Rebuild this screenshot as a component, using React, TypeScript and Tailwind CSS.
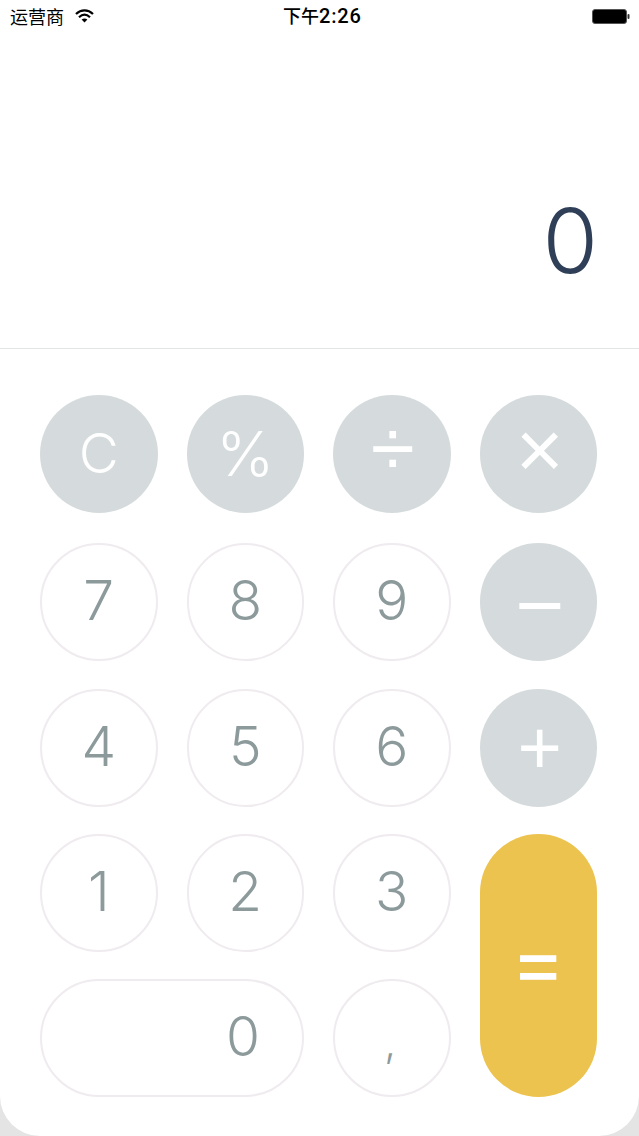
import React from "react";

const digitFont = "font-['Inter','Liberation_Sans',sans-serif] font-[270]";
const opFont = "font-['Liberation_Sans',sans-serif] font-normal";

function Op({ children, className = "" }: { children: React.ReactNode; className?: string }) {
  return (
    <div className={`flex h-[118px] items-center justify-center self-start rounded-full bg-[#d5dbdc] text-white ${className}`}>
      {children}
    </div>
  );
}

function Num({ children, className = "" }: { children: React.ReactNode; className?: string }) {
  return (
    <div className={`flex h-[118px] items-center justify-center self-start rounded-full border-2 border-[#efebef] bg-white text-[#8c9a9b] leading-none ${digitFont} ${className}`}>
      {children}
    </div>
  );
}

function StatusBar() {
  return (
    <div className="relative flex h-[32px] items-center justify-between pl-[10px] pr-[9px] text-[18px] leading-none text-black font-['Noto_Sans_CJK_SC','Liberation_Sans',sans-serif]">
      <div className="flex items-center gap-[11px]">
        <span>运营商</span>
        <svg width="19" height="14" viewBox="0 0 19 14" fill="none" stroke="#000" strokeWidth="2.2">
          <path d="M1 5 C6 0.2 13 0.2 18 5" />
          <path d="M4 8.2 C7.4 5 11.6 5 15 8.2" />
          <path d="M9.5 13.5 L6.6 10.6 C8.4 9.2 10.6 9.2 12.4 10.6 Z" fill="#000" stroke="none" />
        </svg>
      </div>
      <span className="absolute left-[283px] top-[6px] font-medium">
        下午<span className="text-[20px] tracking-[0.8px] font-['Roboto','Liberation_Sans',sans-serif]">2:26</span>
      </span>
      <svg width="38" height="15" viewBox="0 0 38 15">
        <rect x="0.5" y="0.5" width="34" height="14" rx="2.5" fill="#000" stroke="#555" />
        <rect x="35.5" y="5" width="2" height="5" rx="1" fill="#333" />
      </svg>
    </div>
  );
}

export default function App() {
  const d = "pb-[4px] text-[55px]";
  return (
    <div className="h-[1136px] w-[639px] overflow-hidden bg-[#e4e4e4]">
      <div className="flex h-[1136px] flex-col rounded-b-[40px] bg-white">
        <StatusBar />
        <div className="flex h-[317px] items-end justify-end border-b border-[#e3e4e4] pb-[62px] pr-[41px]">
          <span className="text-[90px] font-light leading-none text-[#2f3f58] font-['Inter','Liberation_Sans',sans-serif]">0</span>
        </div>
        <div className="grid grid-cols-4 grid-rows-[148px_146px_145px_145px_118px] gap-x-[29px] pl-[40px] pr-[42px] pt-[46px]">
          <Op className="pb-[2px] text-[55px] leading-none font-light font-['Inter','Liberation_Sans',sans-serif]">C</Op>
          <Op className="text-[62px] leading-none font-light font-['Inter','Liberation_Sans',sans-serif]">%</Op>
          <Op className={`pb-[10px] pl-[2px] text-[80px] leading-none ${opFont}`}>÷</Op>
          <Op className={`pb-[8px] pl-[3px] text-[82px] leading-none ${opFont}`}>×</Op>
          <Num className={d}>7</Num>
          <Num className={d}>8</Num>
          <Num className={d}>9</Num>
          <Op className={`pl-[3px] pt-[6px] text-[84px] leading-none ${opFont}`}>−</Op>
          <Num className={d}>4</Num>
          <Num className={d}>5</Num>
          <Num className={d}>6</Num>
          <Op className={`pl-[3px] text-[76px] leading-none ${opFont}`}>+</Op>
          <Num className={d}>1</Num>
          <Num className={d}>2</Num>
          <Num className={d}>3</Num>
          <div className="row-span-2 flex h-[263px] items-center justify-center self-start rounded-full bg-[#edc34f] pb-[8px] text-[82px] font-normal leading-none text-white font-['Inter','Liberation_Sans',sans-serif]">=</div>
          <Num className={`col-span-2 justify-end ${d}`}>
            <span className="w-[118px] text-center">0</span>
          </Num>
          <Num className="pr-[3px] pt-[8px] text-[42px]">,</Num>
        </div>
      </div>
    </div>
  );
}
